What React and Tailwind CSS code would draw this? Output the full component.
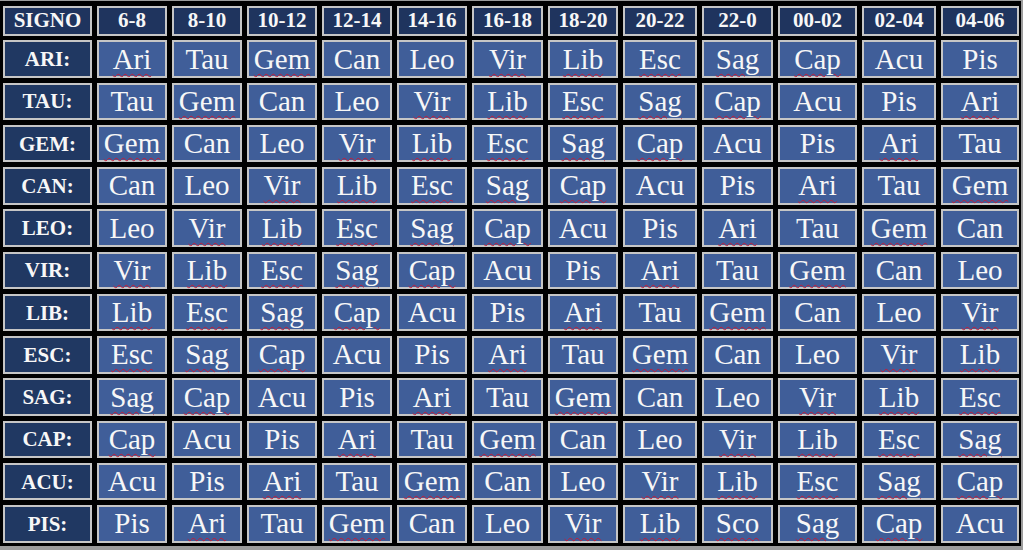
import React from "react";

const headers = ["SIGNO", "6-8", "8-10", "10-12", "12-14", "14-16", "16-18", "18-20", "20-22", "22-0", "00-02", "02-04", "04-06"];

const rows = [
  ["ARI:", ["Ari", "Tau", "Gem", "Can", "Leo", "Vir", "Lib", "Esc", "Sag", "Cap", "Acu", "Pis"]],
  ["TAU:", ["Tau", "Gem", "Can", "Leo", "Vir", "Lib", "Esc", "Sag", "Cap", "Acu", "Pis", "Ari"]],
  ["GEM:", ["Gem", "Can", "Leo", "Vir", "Lib", "Esc", "Sag", "Cap", "Acu", "Pis", "Ari", "Tau"]],
  ["CAN:", ["Can", "Leo", "Vir", "Lib", "Esc", "Sag", "Cap", "Acu", "Pis", "Ari", "Tau", "Gem"]],
  ["LEO:", ["Leo", "Vir", "Lib", "Esc", "Sag", "Cap", "Acu", "Pis", "Ari", "Tau", "Gem", "Can"]],
  ["VIR:", ["Vir", "Lib", "Esc", "Sag", "Cap", "Acu", "Pis", "Ari", "Tau", "Gem", "Can", "Leo"]],
  ["LIB:", ["Lib", "Esc", "Sag", "Cap", "Acu", "Pis", "Ari", "Tau", "Gem", "Can", "Leo", "Vir"]],
  ["ESC:", ["Esc", "Sag", "Cap", "Acu", "Pis", "Ari", "Tau", "Gem", "Can", "Leo", "Vir", "Lib"]],
  ["SAG:", ["Sag", "Cap", "Acu", "Pis", "Ari", "Tau", "Gem", "Can", "Leo", "Vir", "Lib", "Esc"]],
  ["CAP:", ["Cap", "Acu", "Pis", "Ari", "Tau", "Gem", "Can", "Leo", "Vir", "Lib", "Esc", "Sag"]],
  ["ACU:", ["Acu", "Pis", "Ari", "Tau", "Gem", "Can", "Leo", "Vir", "Lib", "Esc", "Sag", "Cap"]],
  ["PIS:", ["Pis", "Ari", "Tau", "Gem", "Can", "Leo", "Vir", "Lib", "Sco", "Sag", "Cap", "Acu"]],
];

const flagged = new Set(["Ari", "Gem", "Vir", "Lib", "Esc", "Sag", "Cap", "Sco"]);

function HeaderCell({ text }) {
  return (
    <div className="flex items-center justify-center border-2 border-[#c6c6c6] bg-[#1f345e] text-[21px] font-bold leading-none text-[#f7f7f7]">
      {text}
    </div>
  );
}

function LabelCell({ text }) {
  return (
    <div className="flex items-center justify-center border-2 border-[#c6c6c6] bg-[#203862] pt-[1px] text-[21px] font-bold leading-none text-[#f7f7f7]">
      {text}
    </div>
  );
}

function DataCell({ text }) {
  return (
    <div className="flex items-center justify-center border-2 border-[#c6c6c6] bg-[#405e99] text-[29px] leading-none text-[#f7f7f7]">
      {flagged.has(text) ? (
        <span className="underline decoration-wavy decoration-[#c41a36] decoration-[1px] underline-offset-[4px]">{text}</span>
      ) : (
        <span>{text}</span>
      )}
    </div>
  );
}

export default function App() {
  return (
    <div className="h-[550px] w-[1023px] overflow-hidden bg-[#9c9c9c] pt-[1px] pr-[2px] pb-[4px] font-['Liberation_Serif','Times_New_Roman',serif]">
      <div className="h-full w-full bg-black pl-[3px] pt-[5px]">
        <div className="grid grid-cols-[89px_70px_70px_70px_70px_70px_71px_70px_74px_71px_79px_74px_78px] grid-rows-[29.5px_repeat(12,37.5px)] gap-x-[5px] gap-y-[4.77px]">
          {headers.map((h) => (
            <HeaderCell key={h} text={h} />
          ))}
          {rows.map(([label, cells]) => (
            <React.Fragment key={label}>
              <LabelCell text={label} />
              {cells.map((c, i) => (
                <DataCell key={label + i} text={c} />
              ))}
            </React.Fragment>
          ))}
        </div>
      </div>
    </div>
  );
}
